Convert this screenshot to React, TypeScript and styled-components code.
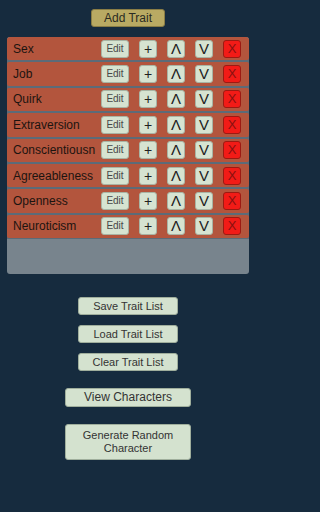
import React from 'react';
import styled, {createGlobalStyle} from 'styled-components';

const GlobalStyle = createGlobalStyle`
  html, body {
    margin: 0;
    padding: 0;
    background: #162b3e;
  }
  body {
    font-family: "Liberation Sans", Arial, sans-serif;
  }
`;

const traits = [
  'Sex',
  'Job',
  'Quirk',
  'Extraversion',
  'Conscientiousn',
  'Agreeableness',
  'Openness',
  'Neuroticism'
];

const Page = styled.div`
  width: 256px;
  height: 512px;
  display: flex;
  flex-direction: column;
  align-items: center;
  padding-top: 9px;
  box-sizing: border-box;
`;

const AddButton = styled.button`
  width: 74px;
  height: 18px;
  padding: 0;
  border: 1px solid #8a7d45;
  border-radius: 3px;
  background: #b9aa63;
  color: #2a2a22;
  font-family: inherit;
  font-size: 12px;
  line-height: 16px;
`;

const Panel = styled.div`
  width: 242px;
  height: 237px;
  margin-top: 10px;
  background: #78848d;
  border-radius: 3px;
  overflow: hidden;
  display: flex;
  flex-direction: column;
`;

const TraitList = styled.div`
  display: flex;
  flex-direction: column;
  gap: 2px;
  background: #5c6b78;
  padding-bottom: 1px;
`;

const Row = styled.div`
  height: 23.4px;
  display: flex;
  align-items: center;
  background: #b3553d;
  border-radius: 2px;
  padding-left: 6px;
  box-sizing: border-box;
`;

const TraitName = styled.span`
  flex: 1;
  font-size: 12px;
  color: #1c1410;
  white-space: nowrap;
  overflow: hidden;
`;

const RowButton = styled.button<{$wide?: boolean; $danger?: boolean; $size?: number}>`
  width: ${(p) => (p.$wide ? '28px' : '18px')};
  height: 18px;
  margin-right: ${(p) => (p.$danger ? '8px' : '10px')};
  padding: 0;
  border: 1px solid ${(p) => (p.$danger ? '#9c1a12' : '#a8b4a4')};
  border-radius: 3px;
  background: ${(p) => (p.$danger ? '#f21b17' : '#d6e3d1')};
  color: ${(p) => (p.$danger ? '#8a1010' : p.$wide ? '#474747' : '#202020')};
  font-family: inherit;
  font-size: ${(p) => p.$size ?? 14}px;
  line-height: 16px;
  display: flex;
  align-items: center;
  justify-content: center;
`;

const MenuGroup = styled.div<{$top: number; $gap: number}>`
  display: flex;
  flex-direction: column;
  align-items: center;
  gap: ${(p) => p.$gap}px;
  margin-top: ${(p) => p.$top}px;
`;

const MenuButton = styled.button<{$width: number; $height: number; $size: number}>`
  width: ${(p) => p.$width}px;
  height: ${(p) => p.$height}px;
  padding: 0 8px;
  border: 1px solid #9fae9c;
  border-radius: 3px;
  background: #d4e2cf;
  color: #333;
  font-family: inherit;
  font-size: ${(p) => p.$size}px;
  line-height: 13px;
`;

const App = () => {
  return (
    <Page>
      <GlobalStyle />
      <AddButton>Add Trait</AddButton>
      <Panel>
        <TraitList>
          {traits.map((t) => (
            <Row key={t}>
              <TraitName>{t}</TraitName>
              <RowButton $wide $size={10}>Edit</RowButton>
              <RowButton>+</RowButton>
              <RowButton $size={15}>Λ</RowButton>
              <RowButton $size={15}>V</RowButton>
              <RowButton $danger $size={13}>X</RowButton>
            </Row>
          ))}
        </TraitList>
      </Panel>
      <MenuGroup $top={23} $gap={10}>
        <MenuButton $width={100} $height={18} $size={11}>Save Trait List</MenuButton>
        <MenuButton $width={100} $height={18} $size={11}>Load Trait List</MenuButton>
        <MenuButton $width={100} $height={18} $size={11}>Clear Trait List</MenuButton>
      </MenuGroup>
      <MenuGroup $top={17} $gap={17}>
        <MenuButton $width={126} $height={19} $size={12}>View Characters</MenuButton>
        <MenuButton $width={126} $height={36} $size={11}>
          Generate Random
          <br />
          Character
        </MenuButton>
      </MenuGroup>
    </Page>
  );
};

export default App;
